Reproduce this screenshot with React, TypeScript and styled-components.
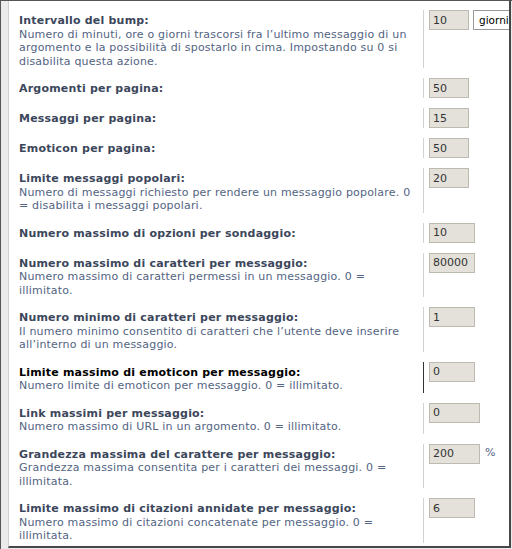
import { FC } from 'react';
import styled, { createGlobalStyle } from 'styled-components';

interface Setting {
  title: string;
  explain?: string[];
  value: string;
  width: number;
  unit?: string;
  select?: string;
  active?: boolean;
}

// explain lines are kept as they wrap in the board's admin panel
const settings: Setting[] = [
  {
    title: 'Intervallo del bump:',
    explain: [
      'Numero di minuti, ore o giorni trascorsi fra l’ultimo messaggio di un',
      'argomento e la possibilità di spostarlo in cima. Impostando su 0 si',
      'disabilita questa azione.',
    ],
    value: '10',
    width: 40,
    select: 'giorni',
  },
  { title: 'Argomenti per pagina:', value: '50', width: 40 },
  { title: 'Messaggi per pagina:', value: '15', width: 40 },
  { title: 'Emoticon per pagina:', value: '50', width: 40 },
  {
    title: 'Limite messaggi popolari:',
    explain: [
      'Numero di messaggi richiesto per rendere un messaggio popolare. 0',
      '= disabilita i messaggi popolari.',
    ],
    value: '20',
    width: 40,
  },
  { title: 'Numero massimo di opzioni per sondaggio:', value: '10', width: 46 },
  {
    title: 'Numero massimo di caratteri per messaggio:',
    explain: ['Numero massimo di caratteri permessi in un messaggio. 0 =', 'illimitato.'],
    value: '80000',
    width: 46,
  },
  {
    title: 'Numero minimo di caratteri per messaggio:',
    explain: [
      'Il numero minimo consentito di caratteri che l’utente deve inserire',
      'all’interno di un messaggio.',
    ],
    value: '1',
    width: 46,
  },
  {
    title: 'Limite massimo di emoticon per messaggio:',
    explain: ['Numero limite di emoticon per messaggio. 0 = illimitato.'],
    value: '0',
    width: 46,
    active: true,
  },
  {
    title: 'Link massimi per messaggio:',
    explain: ['Numero massimo di URL in un argomento. 0 = illimitato.'],
    value: '0',
    width: 51,
  },
  {
    title: 'Grandezza massima del carattere per messaggio:',
    explain: ['Grandezza massima consentita per i caratteri dei messaggi. 0 =', 'illimitata.'],
    value: '200',
    width: 51,
    unit: '%',
  },
  {
    title: 'Limite massimo di citazioni annidate per messaggio:',
    explain: ['Numero massimo di citazioni concatenate per messaggio. 0 =', 'illimitata.'],
    value: '6',
    width: 46,
  },
];

const App: FC = () => {
  return (
    <>
      <GlobalStyle />
      <Frame>
        <Panel>
          {settings.map((s) => (
            <Row key={s.title}>
              <Label>
                <Title active={s.active}>{s.title}</Title>
                {s.explain?.map((line) => (
                  <Explain key={line}>{line}</Explain>
                ))}
              </Label>
              <Field active={s.active}>
                <TextInput
                  style={{ width: s.width }}
                  defaultValue={s.value}
                  readOnly
                />
                {s.select && <Select>{s.select}</Select>}
                {s.unit && <Unit>{s.unit}</Unit>}
              </Field>
            </Row>
          ))}
        </Panel>
      </Frame>
    </>
  );
};

const GlobalStyle = createGlobalStyle`
  html, body {
    margin: 0;
    padding: 0;
    background: #ececec;
  }
  body {
    font-family: Verdana, "DejaVu Sans", sans-serif;
    font-size: 11px;
  }
`;

const Frame = styled.div`
  box-sizing: border-box;
  width: 512px;
  height: 549px;
  border-top: 1px solid #555;
  border-left: 1px solid #555;
  background: #ebebeb;
  padding: 0 1px 1px 7px;
  display: flex;
`;

const Panel = styled.div`
  flex: 1;
  box-sizing: border-box;
  background: #fff;
  border-left: 1px solid #cfcfcf;
  border-right: 2px solid #474747;
  border-bottom: 2px solid #474747;
  padding: 9px 0 0 10px;
  overflow: hidden;
  display: flex;
  flex-direction: column;
  gap: 10px;
`;

const Row = styled.div`
  display: flex;
  align-items: stretch;
`;

const Label = styled.div`
  width: 404px;
  flex-shrink: 0;
  box-sizing: border-box;
  padding: 4px 10px 0 0;
  line-height: 13.5px;
  letter-spacing: 0.2px;
  white-space: nowrap;
`;

const Title = styled.div<{ active?: boolean }>`
  font-weight: bold;
  color: ${({ active }) => (active ? '#000' : '#3c475b')};
`;

const Explain = styled.div`
  color: #536482;
`;

const Field = styled.div<{ active?: boolean }>`
  display: flex;
  align-items: flex-start;
  gap: 4px;
  padding-left: 5px;
  border-left: 1px solid ${({ active }) => (active ? '#333' : '#d2d2d2')};
`;

const TextInput = styled.input`
  box-sizing: border-box;
  height: 20px;
  margin: 0;
  padding: 0 3px;
  border: 1px solid #bdbab2;
  background: #e4e1da;
  color: #333;
  font-family: Verdana, "DejaVu Sans", sans-serif;
  font-size: 11px;
  outline: none;
  flex-shrink: 0;
`;

const Select = styled.div`
  box-sizing: border-box;
  height: 20px;
  width: 70px;
  flex-shrink: 0;
  padding: 0 5px;
  border: 1px solid #9a9a9a;
  background: #fff;
  color: #000;
  font-size: 10.5px;
  line-height: 18px;
`;

const Unit = styled.span`
  color: #536482;
  padding: 2px 0 0 1px;
`;

export default App;
